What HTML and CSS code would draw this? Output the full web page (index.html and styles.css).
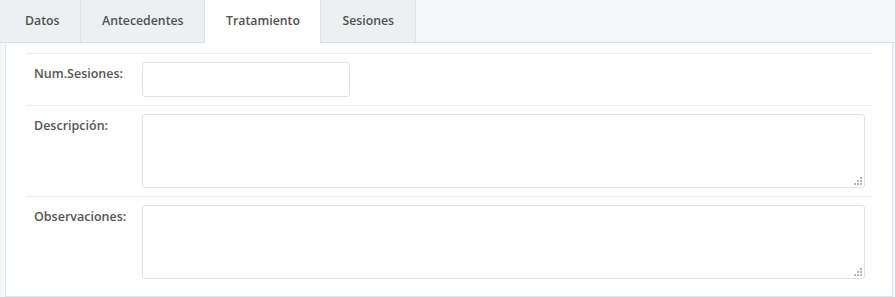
FILE: index.html
```html
<!DOCTYPE html>
<html lang="es">
<head>
    <meta charset="UTF-8">
    <meta name="viewport" content="width=device-width, initial-scale=1.0">
    <title>Tratamiento</title>
    <link rel="stylesheet" href="styles.css">
</head>
<body>
    <ul class="tabs">
        <li class="tab">Datos</li>
        <li class="tab">Antecedentes</li>
        <li class="tab active">Tratamiento</li>
        <li class="tab">Sesiones</li>
    </ul>
    <div class="panel">
        <form class="form">
            <div class="row">
                <label for="numSesiones">Num.Sesiones:</label>
                <input type="text" id="numSesiones" class="input-small">
            </div>
            <div class="row">
                <label for="descripcion">Descripción:</label>
                <div class="area">
                    <textarea id="descripcion"></textarea>
                    <svg class="grip" width="8" height="8" viewBox="0 0 8 8">
                        <rect x="6" y="0" width="2" height="2"/>
                        <rect x="3" y="3" width="2" height="2"/>
                        <rect x="6" y="3" width="2" height="2"/>
                        <rect x="0" y="6" width="2" height="2"/>
                        <rect x="3" y="6" width="2" height="2"/>
                        <rect x="6" y="6" width="2" height="2"/>
                    </svg>
                </div>
            </div>
            <div class="row">
                <label for="observaciones">Observaciones:</label>
                <div class="area">
                    <textarea id="observaciones"></textarea>
                    <svg class="grip" width="8" height="8" viewBox="0 0 8 8">
                        <rect x="6" y="0" width="2" height="2"/>
                        <rect x="3" y="3" width="2" height="2"/>
                        <rect x="6" y="3" width="2" height="2"/>
                        <rect x="0" y="6" width="2" height="2"/>
                        <rect x="3" y="6" width="2" height="2"/>
                        <rect x="6" y="6" width="2" height="2"/>
                    </svg>
                </div>
            </div>
        </form>
    </div>
</body>
</html>
```

FILE: styles.css
```css
body {
    font-family: "Open Sans", Arial, sans-serif;
    font-size: 12.5px;
    margin: 0;
    background-color: #f5f6fa;
    color: #555;
}
.tabs {
    display: flex;
    list-style: none;
    margin: 0;
    padding: 0;
    height: 42px;
    border-bottom: 1px solid #dcdfe3;
}
.tab {
    padding: 0 20.5px 0 21px;
    line-height: 42px;
    font-size: 12.3px;
    font-weight: 600;
    color: #505050;
    background-color: #edf0f2;
    border-right: 1px solid #dde2e5;
}
.tab:first-child {
    padding-left: 25px;
}
.tab.active {
    background-color: #fff;
    height: 43px;
}
.panel {
    margin: 0 2px 1px 5px;
    background: #fff;
    border: 1px solid #e2e5e8;
    border-top: none;
    padding: 10px 19px 17px 20px;
}
.row {
    display: flex;
    align-items: flex-start;
    border-top: 1px solid #ebedef;
    padding: 8px;
}
.row:last-child {
    padding-bottom: 0;
}
label {
    width: 108px;
    flex-shrink: 0;
    font-weight: 600;
    color: #555;
    padding-top: 3px;
}
input, textarea {
    border: 1px solid #dde3e6;
    border-radius: 3px;
    font-family: inherit;
    font-size: 13px;
    box-sizing: border-box;
}
.input-small {
    width: 208px;
    height: 35px;
    padding: 6px 10px;
}
.area {
    flex: 1;
    position: relative;
    display: flex;
}
textarea {
    flex: 1;
    height: 74px;
    padding: 6px 10px;
    resize: none;
}
.grip {
    position: absolute;
    right: 3px;
    bottom: 3px;
    fill: #b4b4b4;
}
```
